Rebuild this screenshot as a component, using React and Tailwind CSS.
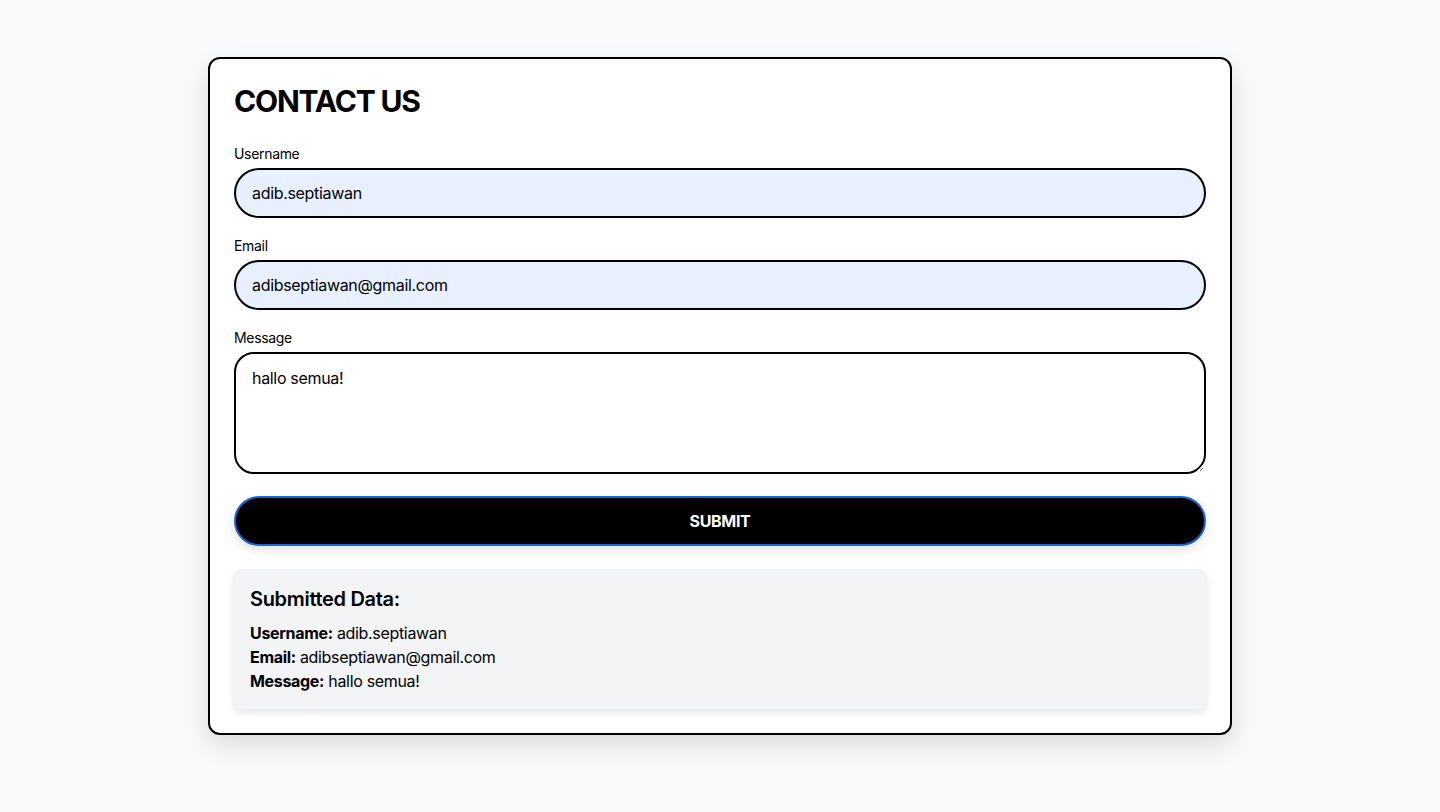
import { useState } from "react";

export default function App() {
  const [form, setForm] = useState({
    username: "adib.septiawan",
    email: "adibseptiawan@gmail.com",
    message: "hallo semua!",
  });
  const [submitted, setSubmitted] = useState({
    username: "adib.septiawan",
    email: "adibseptiawan@gmail.com",
    message: "hallo semua!",
  });

  const handleSubmit = (e) => {
    e.preventDefault();
    setSubmitted(form);
  };

  return (
    <div className="min-h-screen bg-[#f8f9fb] pt-[57px] pb-10 font-['Inter','Liberation_Sans',sans-serif] text-black tracking-[-0.02em]">
      <div className="mx-auto max-w-5xl bg-white border-2 border-black rounded-xl p-6 shadow-[0_10px_25px_rgba(0,0,0,0.12)]">
        <h1 className="text-3xl font-bold mb-6 tracking-[-0.04em]">CONTACT US</h1>

        <form onSubmit={handleSubmit}>
          <label className="block text-sm mb-1 pt-px">Username</label>
          <input
            value={form.username}
            onChange={(e) => setForm({ ...form, username: e.target.value })}
            className="block w-full h-[50px] border-2 border-black rounded-full bg-[#e8f0fe] px-4 text-base outline-none mb-[17px]"
          />

          <label className="block text-sm mb-1 pt-px">Email</label>
          <input
            value={form.email}
            onChange={(e) => setForm({ ...form, email: e.target.value })}
            className="block w-full h-[50px] border-2 border-black rounded-full bg-[#e8f0fe] px-4 text-base outline-none mb-[17px]"
          />

          <label className="block text-sm mb-1 pt-px">Message</label>
          <textarea
            value={form.message}
            onChange={(e) => setForm({ ...form, message: e.target.value })}
            className="block w-full h-[122px] border-2 border-black rounded-[20px] px-4 py-3 text-base outline-none mb-[22px] resize-y"
          />

          <button
            type="submit"
            className="block w-full h-[50px] bg-black text-white font-bold text-base border-2 border-[#1a66d9] rounded-full shadow-[0_4px_10px_rgba(0,0,0,0.12)]"
          >
            SUBMIT
          </button>
        </form>

        {/* Submitted data */}
        <div className="mt-[23px] bg-[#f3f4f6] rounded-lg p-4 shadow-[0_4px_8px_rgba(0,0,0,0.1)]">
          <h2 className="text-xl font-semibold mb-2">Submitted Data:</h2>
          <p><span className="font-bold">Username:</span> {submitted.username}</p>
          <p><span className="font-bold">Email:</span> {submitted.email}</p>
          <p><span className="font-bold">Message:</span> {submitted.message}</p>
        </div>
      </div>
    </div>
  );
}
